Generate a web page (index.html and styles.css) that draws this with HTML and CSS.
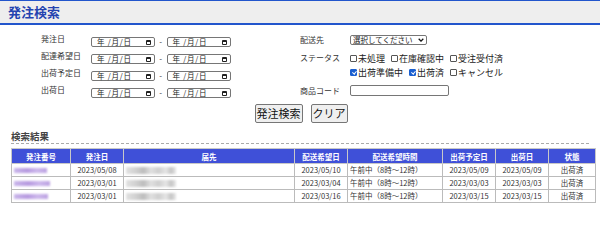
FILE: index.html
```html
<html lang="ja"><head>
    <meta charset="UTF-8">
    <meta name="viewport" content="width=device-width, initial-scale=1.0">
    <title>発注検索</title>
    <link rel="stylesheet" href="styles.css">
</head>
<body>
    <div class="page-title">発注検索</div>

    <form id="searchForm">
        <div class="search-area">
            <div class="search-col left-col">
                <div class="form-row">
                    <label>発注日</label>
                    <span class="date-box"><span class="date-text">年 /月/日</span><span class="cal"></span></span>
                    <span class="sep">-</span>
                    <span class="date-box"><span class="date-text">年 /月/日</span><span class="cal"></span></span>
                </div>
                <div class="form-row">
                    <label>配達希望日</label>
                    <span class="date-box"><span class="date-text">年 /月/日</span><span class="cal"></span></span>
                    <span class="sep">-</span>
                    <span class="date-box"><span class="date-text">年 /月/日</span><span class="cal"></span></span>
                </div>
                <div class="form-row">
                    <label>出荷予定日</label>
                    <span class="date-box"><span class="date-text">年 /月/日</span><span class="cal"></span></span>
                    <span class="sep">-</span>
                    <span class="date-box"><span class="date-text">年 /月/日</span><span class="cal"></span></span>
                </div>
                <div class="form-row">
                    <label>出荷日</label>
                    <span class="date-box"><span class="date-text">年 /月/日</span><span class="cal"></span></span>
                    <span class="sep">-</span>
                    <span class="date-box"><span class="date-text">年 /月/日</span><span class="cal"></span></span>
                </div>
            </div>

            <div class="search-col right-col">
                <div class="form-row">
                    <label for="dest">配送先</label>
                    <span class="select-wrap">
                        <select id="dest" class="dest-select">
                            <option>選択してください</option>
                        </select>
                        <svg class="chevron" width="6" height="4" viewBox="0 0 6 4"><path d="M0.7 0.8 L3 3.1 L5.3 0.8" fill="none" stroke="#111" stroke-width="1.3"/></svg>
                    </span>
                </div>
                <div class="form-row status-row">
                    <label>ステータス</label>
                    <div class="status-list">
                        <div class="status-line">
                            <label class="chk"><input type="checkbox"><span class="box"></span>未処理</label>
                            <label class="chk"><input type="checkbox"><span class="box"></span>在庫確認中</label>
                            <label class="chk"><input type="checkbox"><span class="box"></span>受注受付済</label>
                        </div>
                        <div class="status-line">
                            <label class="chk"><input type="checkbox" checked><span class="box"></span>出荷準備中</label>
                            <label class="chk"><input type="checkbox" checked><span class="box"></span>出荷済</label>
                            <label class="chk"><input type="checkbox"><span class="box"></span>キャンセル</label>
                        </div>
                    </div>
                </div>
                <div class="form-row code-row">
                    <label for="code">商品コード</label>
                    <input id="code" class="code-input" type="text">
                </div>
            </div>
        </div>

        <div class="buttons">
            <button type="submit">発注検索</button>
            <button type="reset">クリア</button>
        </div>
    </form>

    <div class="result-title">検索結果</div>

    <table class="result">
        <thead>
            <tr>
                <th class="c-no">発注番号</th>
                <th class="c-date">発注日</th>
                <th class="c-dest">届先</th>
                <th class="c-date">配送希望日</th>
                <th class="c-time">配送希望時間</th>
                <th class="c-date">出荷予定日</th>
                <th class="c-date">出荷日</th>
                <th class="c-status">状態</th>
            </tr>
        </thead>
        <tbody>
            <tr>
                <td><span class="mask-link w33"></span></td>
                <td class="center">2023/05/08</td>
                <td><span class="mask-text"></span></td>
                <td class="center">2023/05/10</td>
                <td>午前中（8時～12時）</td>
                <td class="center">2023/05/09</td>
                <td class="center">2023/05/09</td>
                <td class="center">出荷済</td>
            </tr>
            <tr>
                <td><span class="mask-link w36"></span></td>
                <td class="center">2023/03/01</td>
                <td><span class="mask-text"></span></td>
                <td class="center">2023/03/04</td>
                <td>午前中（8時～12時）</td>
                <td class="center">2023/03/03</td>
                <td class="center">2023/03/03</td>
                <td class="center">出荷済</td>
            </tr>
            <tr>
                <td><span class="mask-link w34"></span></td>
                <td class="center">2023/03/01</td>
                <td><span class="mask-text"></span></td>
                <td class="center">2023/03/16</td>
                <td>午前中（8時～12時）</td>
                <td class="center">2023/03/15</td>
                <td class="center">2023/03/15</td>
                <td class="center">出荷済</td>
            </tr>
        </tbody>
    </table>
</body></html>
```

FILE: styles.css
```css
body {
    margin: 0;
    font-family: "Noto Sans CJK JP", "Liberation Sans", sans-serif;
    color: #333;
    background: #fff;
}

.page-title {
    border-top: 1px solid #2255cc;
    border-bottom: 2px solid #2255cc;
    background-color: #eeeeee;
    height: 22px;
    line-height: 22px;
    padding-left: 8px;
    font-size: 13px;
    font-weight: bold;
    color: #2443b0;
}

#searchForm {
    margin: 0;
}

.search-area {
    display: flex;
    align-items: flex-start;
    padding: 10px 0 0 41px;
}

.left-col {
    width: 259px;
    padding-top: 2px;
}

.form-row {
    display: flex;
    align-items: center;
}

.form-row > label {
    font-size: 8px;
    line-height: 10px;
    color: #333;
}

.left-col .form-row {
    align-items: flex-start;
    height: 10px;
    margin-bottom: 7px;
}
.left-col .form-row:last-child {
    margin-bottom: 0;
}
.left-col .form-row label {
    width: 50px;
    margin-top: -3px;
}

.date-box {
    display: flex;
    align-items: center;
    justify-content: space-between;
    box-sizing: border-box;
    width: 64px;
    height: 10px;
    border: 1px solid #767676;
    border-radius: 2px;
    padding: 0 3px 0 5px;
    background: #fff;
}
.date-text {
    font-size: 7.5px;
    line-height: 8px;
    letter-spacing: 0.8px;
    color: #222;
}
.cal {
    box-sizing: border-box;
    width: 5px;
    height: 5px;
    border: 1px solid #222;
    border-top-width: 2px;
    border-radius: 1px;
}
.sep {
    width: 11.5px;
    text-align: center;
    font-size: 8px;
    line-height: 10px;
}

.right-col .form-row > label {
    width: 50px;
}

.select-wrap {
    position: relative;
    display: flex;
}
.dest-select {
    appearance: none;
    box-sizing: border-box;
    width: 77px;
    height: 10px;
    padding: 0 0 0 2px;
    font-family: inherit;
    font-size: 7.5px;
    line-height: 8px;
    border: 1px solid #767676;
    border-radius: 2px;
    background: #fff;
    color: #222;
}
.chevron {
    position: absolute;
    right: 3px;
    top: 3px;
}

.status-row {
    align-items: flex-start;
    margin-top: 6px;
}
.status-line {
    display: flex;
    white-space: nowrap;
}
.chk {
    display: flex;
    align-items: center;
    height: 14px;
    font-size: 9px;
    color: #222;
    margin-right: 6px;
}
.chk input {
    display: none;
}
.chk .box {
    position: relative;
    box-sizing: border-box;
    width: 7px;
    height: 7px;
    margin-right: 1px;
    border: 1px solid #555;
    border-radius: 1px;
    background: #fff;
}
.chk input:checked + .box {
    border-color: #1a5fd0;
    background: #1a5fd0;
}
.chk input:checked + .box::after {
    content: "";
    position: absolute;
    left: 1.5px;
    top: 0;
    width: 1.5px;
    height: 3px;
    border: solid #fff;
    border-width: 0 1px 1px 0;
    transform: rotate(40deg);
}
.status-row > label {
    line-height: 14px;
}

.code-row {
    margin-top: 6px;
}
.code-input {
    box-sizing: border-box;
    width: 99px;
    height: 11px;
    border: 1px solid #767676;
    border-radius: 2px;
    padding: 0;
}

.buttons {
    display: flex;
    justify-content: center;
    gap: 8px;
    margin-top: 6px;
    padding-left: 2px;
}
.buttons button {
    height: 19px;
    padding: 0 1px;
    font-family: inherit;
    font-size: 11px;
    line-height: 17px;
    color: #111;
    background-color: #efefef;
    border: 1px solid #767676;
    border-radius: 2px;
}

.result-title {
    margin: 7px 11px 0 11px;
    padding-bottom: 1px;
    border-bottom: 1px dashed #aaa;
    font-size: 9.5px;
    line-height: 12px;
    font-weight: bold;
    color: #444;
}

.result {
    margin: 4px 0 0 11px;
    width: 578px;
    border-collapse: collapse;
    table-layout: fixed;
    font-size: 7.5px;
    color: #333;
}
.result th {
    height: 15px;
    padding: 0;
    background-color: #3f50d8;
    color: #fff;
    font-weight: bold;
    font-size: 7.5px;
    border: 1px solid #c8c8c8;
}
.result td {
    height: 12px;
    line-height: 12px;
    padding: 0 2px;
    border: 1px solid #bbb;
    white-space: nowrap;
    overflow: hidden;
}
.result .center {
    text-align: center;
}
.c-no { width: 58px; }
.c-date { width: 52px; }
.c-dest { width: 170px; }
.c-time { width: 94px; }
.c-status { width: 46px; }

.mask-link {
    display: inline-block;
    height: 5px;
    vertical-align: middle;
    background: linear-gradient(90deg, #c9b6ea, #b79ae0 40%, #cdb8ec 70%, #bca2e2);
    filter: blur(1px);
}
.w33 { width: 33px; }
.w34 { width: 34px; }
.w36 { width: 36px; }

.mask-text {
    display: inline-block;
    width: 50px;
    height: 7px;
    vertical-align: middle;
    background: linear-gradient(90deg, #e2e2e2 0, #d0d0d0 20%, #bdbdbd 35%, #e0e0e0 50%, #cfcfcf 65%, #e6e6e6 80%, #c4c4c4 90%, #e8e8e8 100%);
    filter: blur(1px);
}
```
